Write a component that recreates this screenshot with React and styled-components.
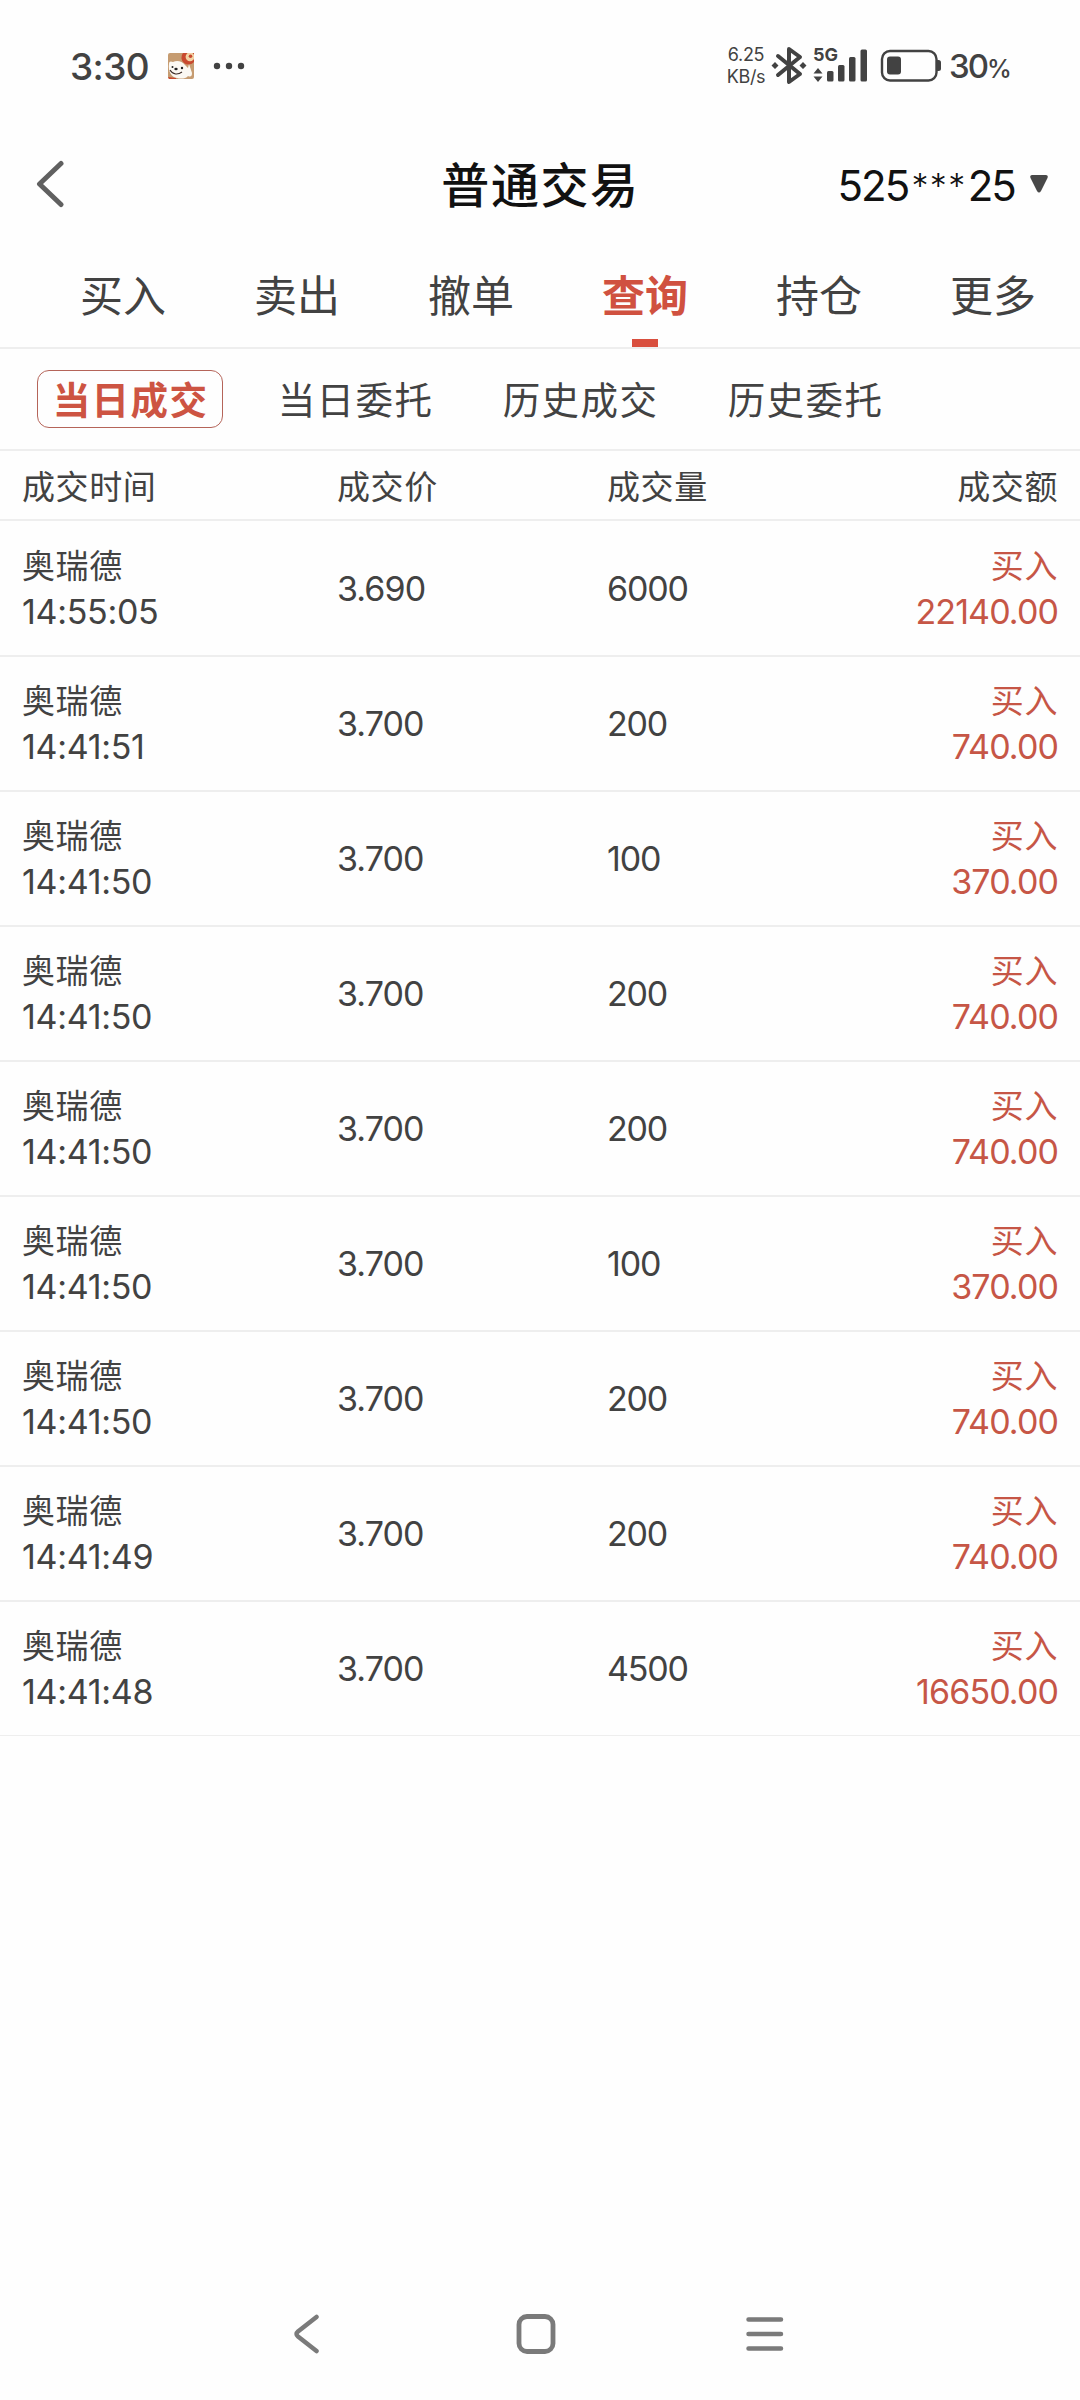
import styled, { createGlobalStyle } from "styled-components";

const GlobalStyle = createGlobalStyle`
    * {
        box-sizing: border-box;
    }

    body {
        margin: 0;
        background-color: #fefefe;
        color: #424242;
        font-family: Inter, "Noto Sans CJK SC", sans-serif;
    }
`;

const Container = styled.div`
    width: 1080px;
    height: 2400px;
    display: flex;
    flex-direction: column;
    overflow: hidden;
`;

const StatusBar = styled.div`
    height: 132px;
    padding: 0 70px 0 70px;
    display: flex;
    align-items: center;
    justify-content: space-between;
`;

const StatusGroup = styled.div`
    display: flex;
    align-items: center;
`;

const Clock = styled.span`
    width: 98px;
    padding-top: 2px;
    font-size: 37px;
    font-weight: 500;
    line-height: 40px;
    letter-spacing: -0.6px;
`;

const Speed = styled.div`
    width: 44px;
    display: flex;
    flex-direction: column;
    align-items: center;
    font-size: 18px;
    line-height: 22px;
    letter-spacing: -0.3px;
`;

const Percent = styled.span`
    width: 61px;
    padding-top: 2px;
    font-size: 33px;
    font-weight: 500;
    line-height: 40px;
    letter-spacing: -2px;
    white-space: nowrap;
`;

const PercentSign = styled.span`
    font-size: 25px;
`;

const Header = styled.div`
    height: 108px;
    padding: 0 32px 0 36px;
    display: grid;
    grid-template-columns: 1fr auto 1fr;
    align-items: center;
`;

const Title = styled.h1`
    margin: 0;
    padding-right: 3px;
    color: #111;
    font-size: 48px;
    font-weight: 500;
    line-height: 60px;
    letter-spacing: 1.6px;
`;

const BackIcon = styled.svg`
    margin-bottom: 4px;
`;

const Account = styled.div`
    display: flex;
    align-items: center;
    justify-content: flex-end;
    color: #111;
    font-size: 42px;
    line-height: 50px;
    letter-spacing: -1.9px;
`;

const Mask = styled.span`
    margin-left: 3px;
    margin-right: 1px;
    font-size: 34px;
    font-weight: 300;
    letter-spacing: 1.4px;
`;

const Arrow = styled.svg`
    margin-left: 15px;
    margin-bottom: 4px;
`;

const Tabs = styled.div`
    height: 109px;
    padding-left: 36px;
    display: flex;
    border-bottom: 2px solid #eee;
`;

const Tab = styled.div`
    width: 174px;
    flex-shrink: 0;
    padding-top: 26px;
    display: flex;
    flex-direction: column;
    align-items: center;
    justify-content: space-between;
    color: ${(props) => (props.$active ? "#d05140" : "inherit")};
    font-size: 43px;
    font-weight: ${(props) => (props.$active ? 700 : 400)};
    line-height: 60px;
`;

const Indicator = styled.div`
    width: 26px;
    height: 8px;
    background-color: #d94f3e;
`;

const SubTabs = styled.div`
    height: 102px;
    padding: 0 37px;
    display: flex;
    align-items: center;
    gap: 39px;
    border-bottom: 2px solid #eee;
`;

const SubTab = styled.div`
    width: 186px;
    height: 58px;
    padding-top: 2px;
    padding-left: 1px;
    border: 1px solid ${(props) => (props.$active ? "#b56459" : "transparent")};
    border-radius: 12px;
    color: ${(props) => (props.$active ? "#cd5442" : "inherit")};
    font-size: 37.5px;
    font-weight: ${(props) => (props.$active ? 700 : 400)};
    line-height: 56px;
    letter-spacing: 1.4px;
    text-align: center;
    white-space: nowrap;
`;

const Columns = styled.div`
    padding: 0 22px;
    display: grid;
    grid-template-columns: 315px 270px 1fr 180px;
    align-items: center;
    border-bottom: 2px solid #eee;
    font-size: 33px;
    letter-spacing: 0.6px;
`;

const TableHead = styled(Columns)`
    height: 70px;
`;

const HeadCell = styled.span`
    text-align: ${(props) => (props.$right ? "right" : "left")};
`;

const Row = styled(Columns)`
    height: 135px;

    &:first-child {
        height: 136px;
    }

    &:last-child {
        border-bottom-width: 1px;
        height: 134px;
    }
`;

const Rows = styled.div`
    flex: 1;
`;

const Cell = styled.div`
    padding-top: 1px;
    display: flex;
    flex-direction: column;
    align-items: ${(props) => (props.$right ? "flex-end" : "flex-start")};
    color: ${(props) => (props.$right ? "#c65646" : "inherit")};
    line-height: 45px;
`;

const Num = styled.span`
    font-size: 34px;
    letter-spacing: -1.2px;
`;

const Price = styled(Num)`
    letter-spacing: -0.9px;
`;

const Time = styled(Num)`
    letter-spacing: -0.3px;
`;

const Amount = styled(Num)`
    letter-spacing: -0.9px;
`;

const NavBar = styled.div`
    height: 132px;
    padding: 0 294px 0 293px;
    display: flex;
    align-items: center;
    justify-content: space-between;
`;

const HomeIcon = styled.svg`
    margin-left: 6px;
`;

const MascotIcon = () => (
    <svg width="26" height="26" viewBox="0 0 26 26">
        <rect width="26" height="26" rx="2" fill="#c69c71" />
        <path d="M15 0H26V9A7 7 0 0 1 15 0Z" fill="#c8492f" />
        <circle cx="22" cy="3.8" r="4.4" fill="#f2d3a4" />
        <circle cx="22.5" cy="3.3" r="1.8" fill="#c8492f" />
        <path d="M1 11C1 8 3 8 5 9C9 7 14 8 17 12L20 15L21 11L24 20C24 24 22 24 20 23C18 26 12 26 9 25C3 24 0 18 1 11Z" fill="#fbf8f2" />
        <path d="M2 17C5 22 10 22 14 19" fill="none" stroke="#3b2b25" strokeWidth="1.1" />
        <circle cx="4.5" cy="14" r="1" fill="#222" />
        <circle cx="14" cy="15" r="1.2" fill="#222" />
        <ellipse cx="8" cy="16" rx="1.7" ry="1.2" fill="#222" />
        <path d="M0 24L8 25V26H1Z" fill="#c8492f" />
    </svg>
);

const MoreDots = styled.svg`
    margin-left: 19px;
`;

const SignalIcons = styled.svg`
    margin-left: 1px;
    margin-right: 6px;
    font-size: 18px;
    font-weight: 700;
`;

const App = () => {
    const tabs = ["买入", "卖出", "撤单", "查询", "持仓", "更多"];
    const subTabs = ["当日成交", "当日委托", "历史成交", "历史委托"];
    const deals = [
        { time: "14:55:05", price: "3.690", volume: "6000", amount: "22140.00" },
        { time: "14:41:51", price: "3.700", volume: "200", amount: "740.00" },
        { time: "14:41:50", price: "3.700", volume: "100", amount: "370.00" },
        { time: "14:41:50", price: "3.700", volume: "200", amount: "740.00" },
        { time: "14:41:50", price: "3.700", volume: "200", amount: "740.00" },
        { time: "14:41:50", price: "3.700", volume: "100", amount: "370.00" },
        { time: "14:41:50", price: "3.700", volume: "200", amount: "740.00" },
        { time: "14:41:49", price: "3.700", volume: "200", amount: "740.00" },
        { time: "14:41:48", price: "3.700", volume: "4500", amount: "16650.00" },
    ];

    return (
        <Container>
            <GlobalStyle />
            <StatusBar>
                <StatusGroup>
                    <Clock>3:30</Clock>
                    <MascotIcon />
                    <MoreDots width="34" height="8" viewBox="0 0 34 8" fill="#424242">
                        <circle cx="4" cy="4" r="3.2" />
                        <circle cx="16" cy="4" r="3.2" />
                        <circle cx="28" cy="4" r="3.2" />
                    </MoreDots>
                </StatusGroup>
                <StatusGroup>
                    <Speed>
                        <span>6.25</span>
                        <span>KB/s</span>
                    </Speed>
                    {/* bluetooth, signal and battery */}
                    <SignalIcons width="174" height="52" viewBox="770 40 174 52" fill="#424242">
                        <path
                            d="M779 56L801 74L790 82V49L801 57L779 75"
                            fill="none"
                            stroke="#424242"
                            strokeWidth="4"
                            strokeLinejoin="round"
                            strokeLinecap="round"
                        />
                        <path d="M776 62l3.5 3.5l-3.5 3.5l-3.5 -3.5zM804 62l3.5 3.5l-3.5 3.5l-3.5 -3.5z" />
                        <text x="814" y="61">5G</text>
                        <path d="M819 68l4.5 5.5h-9zM819 82l4.5 -5.5h-9z" />
                        <rect x="828" y="71" width="6.5" height="10.5" rx="1.5" />
                        <rect x="839" y="65" width="6.5" height="16.5" rx="1.5" />
                        <rect x="850" y="57" width="6.5" height="24.5" rx="1.5" />
                        <rect x="861.5" y="49.5" width="6.5" height="32" rx="1.5" />
                        <rect x="883" y="51" width="54.5" height="29.5" rx="8" fill="none" stroke="#424242" strokeWidth="2.4" />
                        <rect x="888" y="56.5" width="14" height="18" rx="3" />
                        <path d="M938 60h1.500q2.500 0 2.500 2.500v6q0 2.500 -2.500 2.500h-1.500z" />
                    </SignalIcons>
                    <Percent>
                        30<PercentSign>%</PercentSign>
                    </Percent>
                </StatusGroup>
            </StatusBar>
            <Header>
                <BackIcon width="28" height="48" viewBox="0 0 28 48" fill="none" stroke="#606060" strokeWidth="5" strokeLinecap="round" strokeLinejoin="round">
                    <path d="M25 3.500L3.500 24L25 44.500" />
                </BackIcon>
                <Title>普通交易</Title>
                <Account>
                    525<Mask>***</Mask>25
                    <Arrow width="18" height="18" viewBox="0 0 18 18" fill="#484848">
                        <path d="M2 0H16Q18.500 0 17.500 3L11 16Q9 19 7 16L0.500 3Q-0.500 0 2 0Z" />
                    </Arrow>
                </Account>
            </Header>
            <Tabs>
                {tabs.map((tab) => (
                    <Tab key={tab} $active={tab === "查询"}>
                        {tab}
                        {tab === "查询" && <Indicator />}
                    </Tab>
                ))}
            </Tabs>
            <SubTabs>
                {subTabs.map((tab) => (
                    <SubTab key={tab} $active={tab === "当日成交"}>
                        {tab}
                    </SubTab>
                ))}
            </SubTabs>
            <TableHead>
                <HeadCell>成交时间</HeadCell>
                <HeadCell>成交价</HeadCell>
                <HeadCell>成交量</HeadCell>
                <HeadCell $right>成交额</HeadCell>
            </TableHead>
            <Rows>
                {deals.map((deal, index) => (
                    <Row key={index}>
                        <Cell>
                            奥瑞德
                            <Time>{deal.time}</Time>
                        </Cell>
                        <Price>{deal.price}</Price>
                        <Num>{deal.volume}</Num>
                        <Cell $right>
                            买入
                            <Amount>{deal.amount}</Amount>
                        </Cell>
                    </Row>
                ))}
            </Rows>
            <NavBar>
                <svg width="26" height="40" viewBox="0 0 26 40" fill="none" stroke="#7a7a7a" strokeWidth="4.5" strokeLinecap="round">
                    <path d="M23.500 3L5 17.500Q2 20 5 22.500L23.500 37" />
                </svg>
                <HomeIcon width="40" height="40" viewBox="0 0 40 40" fill="none" stroke="#7a7a7a" strokeWidth="4.800">
                    <rect x="3" y="2.500" width="34" height="35" rx="8" />
                </HomeIcon>
                <svg width="40" height="40" viewBox="0 0 40 40" fill="none" stroke="#7a7a7a" strokeWidth="4.500" strokeLinecap="round">
                    <path d="M2.500 5.500H35M2.500 20H35M2.500 34.500H35" />
                </svg>
            </NavBar>
        </Container>
    );
};

export default App;
